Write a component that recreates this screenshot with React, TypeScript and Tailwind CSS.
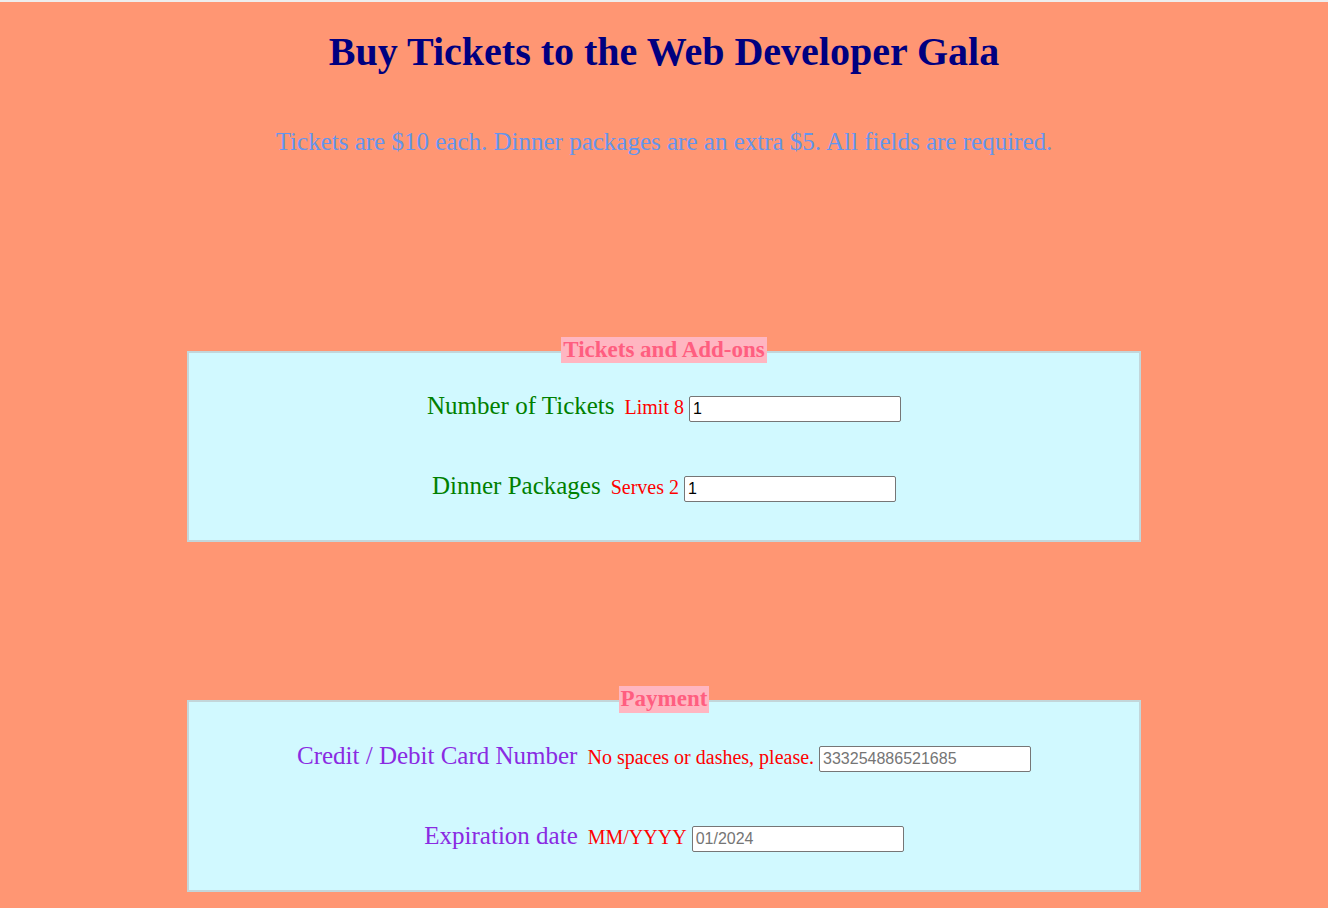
const serif = "font-['Liberation_Serif','Times_New_Roman',serif]";

type Row = {
  label: string;
  hint: string;
  value?: string;
  placeholder?: string;
  tone: 'green' | 'purple';
};

const FieldRow = ({ label, hint, value, placeholder, tone }: Row) => (
  <div className="flex items-baseline justify-center">
    <label className={`text-[25px] ${tone === 'green' ? 'text-[#008000]' : 'text-[#8a2be2]'}`}>{label}</label>
    <span className="ml-[10px] text-[20px] text-[#ff0000]">{hint}</span>
    <input
      type="text"
      defaultValue={value}
      placeholder={placeholder}
      className="ml-[5px] h-[26px] w-[212px] rounded-[2px] border border-[#767676] bg-white px-[3px] font-['Liberation_Sans',Arial,sans-serif] text-[16px] leading-[1.15] text-black placeholder:text-[#757575]"
    />
  </div>
);

const Section = ({ title, rows }: { title: string; rows: Row[] }) => (
  <fieldset className="mx-auto w-[954px] border-2 border-[#c3d6da] bg-[#d1f9ff] pb-[38px]">
    <legend className="relative top-[-2px] mx-auto bg-[#ffb6c1] px-[2px] text-[23px] font-bold text-[#ff5e80]">
      {title}
    </legend>
    <div className="flex flex-col gap-[50px] pt-[27px]">
      {rows.map((r) => (
        <FieldRow key={r.label} {...r} />
      ))}
    </div>
  </fieldset>
);

export default function App() {
  return (
    <div className={`min-h-screen border-t-2 border-[#eeeeee] bg-[#ff9673] pb-10 leading-[1.15] ${serif}`}>
      <h1 className="pt-[27px] text-center text-[40px] font-bold text-[#000080]">
        Buy Tickets to the Web Developer Gala
      </h1>
      <p className="mt-[53px] text-center text-[25px] text-[#6495ed]">
        Tickets are $10 each. Dinner packages are an extra $5. All fields are required.
      </p>

      <form className="mt-[182px] flex flex-col gap-[146px]">
        <Section
          title="Tickets and Add-ons"
          rows={[
            { label: 'Number of Tickets', hint: 'Limit 8', value: '1', tone: 'green' },
            { label: 'Dinner Packages', hint: 'Serves 2', value: '1', tone: 'green' },
          ]}
        />
        <Section
          title="Payment"
          rows={[
            {
              label: 'Credit / Debit Card Number',
              hint: 'No spaces or dashes, please.',
              placeholder: '333254886521685',
              tone: 'purple',
            },
            { label: 'Expiration date', hint: 'MM/YYYY', placeholder: '01/2024', tone: 'purple' },
          ]}
        />
      </form>
    </div>
  );
}
